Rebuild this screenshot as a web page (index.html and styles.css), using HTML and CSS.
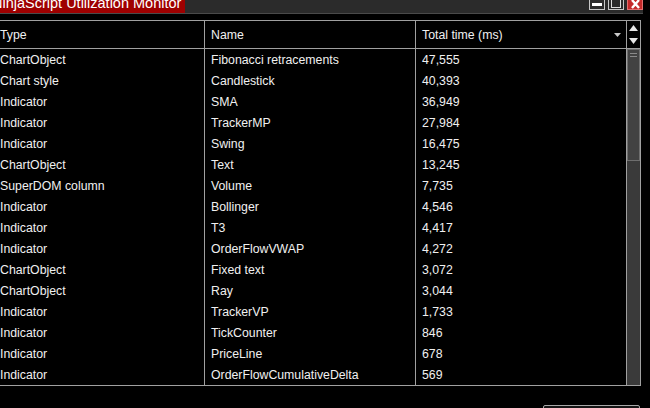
FILE: index.html
```html
<!DOCTYPE html>
<html lang="en">
<head>
  <meta charset="UTF-8" />
  <title>NinjaScript Utilization Monitor</title>
  <link rel="stylesheet" href="styles.css">
</head>
<body>
  <div class="janela">
    <div class="barra-titulo">
      <div class="aba-titulo"><span>NinjaScript Utilization Monitor</span></div>
      <div class="botoes-janela">
        <div class="btn-janela btn-min"><i></i></div>
        <div class="btn-janela btn-max"><i></i></div>
        <div class="btn-janela btn-fechar">
          <svg width="11" height="9" viewBox="0 0 11 9"><path d="M2 0 L9 8 M9 0 L2 8" stroke="#fff" stroke-width="2.4"/></svg>
        </div>
      </div>
    </div>

    <div class="tabela">
      <div class="cabecalho">
        <div class="celula">Type</div>
        <div class="celula">Name</div>
        <div class="celula ordenada">Total time (ms)
          <svg class="seta-ordem" width="7" height="4" viewBox="0 0 7 4"><path d="M0 0 H7 L3.5 4 Z" fill="#c8c8c8"/></svg>
        </div>
        <div class="rolagem-topo">
          <svg width="9" height="6" viewBox="0 0 9 6"><path d="M0 6 H9 L4.5 0 Z" fill="#e6e6e6"/></svg>
          <svg width="9" height="6" viewBox="0 0 9 6"><path d="M0 0 H9 L4.5 6 Z" fill="#e6e6e6"/></svg>
        </div>
      </div>

      <div class="corpo">
        <div class="linhas">
          <div class="linha"><div class="celula">ChartObject</div><div class="celula">Fibonacci retracements</div><div class="celula">47,555</div></div>
          <div class="linha"><div class="celula">Chart style</div><div class="celula">Candlestick</div><div class="celula">40,393</div></div>
          <div class="linha"><div class="celula">Indicator</div><div class="celula">SMA</div><div class="celula">36,949</div></div>
          <div class="linha"><div class="celula">Indicator</div><div class="celula">TrackerMP</div><div class="celula">27,984</div></div>
          <div class="linha"><div class="celula">Indicator</div><div class="celula">Swing</div><div class="celula">16,475</div></div>
          <div class="linha"><div class="celula">ChartObject</div><div class="celula">Text</div><div class="celula">13,245</div></div>
          <div class="linha"><div class="celula">SuperDOM column</div><div class="celula">Volume</div><div class="celula">7,735</div></div>
          <div class="linha"><div class="celula">Indicator</div><div class="celula">Bollinger</div><div class="celula">4,546</div></div>
          <div class="linha"><div class="celula">Indicator</div><div class="celula">T3</div><div class="celula">4,417</div></div>
          <div class="linha"><div class="celula">Indicator</div><div class="celula">OrderFlowVWAP</div><div class="celula">4,272</div></div>
          <div class="linha"><div class="celula">ChartObject</div><div class="celula">Fixed text</div><div class="celula">3,072</div></div>
          <div class="linha"><div class="celula">ChartObject</div><div class="celula">Ray</div><div class="celula">3,044</div></div>
          <div class="linha"><div class="celula">Indicator</div><div class="celula">TrackerVP</div><div class="celula">1,733</div></div>
          <div class="linha"><div class="celula">Indicator</div><div class="celula">TickCounter</div><div class="celula">846</div></div>
          <div class="linha"><div class="celula">Indicator</div><div class="celula">PriceLine</div><div class="celula">678</div></div>
          <div class="linha"><div class="celula">Indicator</div><div class="celula">OrderFlowCumulativeDelta</div><div class="celula">569</div></div>
        </div>
        <div class="rolagem">
          <div class="polegar"><i></i><i></i></div>
        </div>
      </div>
    </div>

    <div class="rodape">
      <button class="btn-rodape"></button>
    </div>
  </div>
</body>
</html>
```

FILE: styles.css
```css
* {
  box-sizing: border-box;
}

body {
  margin: 0;
  width: 650px;
  height: 408px;
  overflow: hidden;
  background-color: #000;
  color: #f0f0f0;
  font-family: "Liberation Sans", Arial, sans-serif;
  font-size: 12.3px;
}

.janela {
  width: 643px;
  height: 408px;
  overflow: hidden;
}

.barra-titulo {
  display: flex;
  height: 14px;
  background-color: #2b2b2b;
  border-bottom: 1px solid #4a4a4a;
  overflow: hidden;
}

.aba-titulo {
  width: 185px;
  height: 13px;
  background-color: #9e0000;
  overflow: hidden;
}

.aba-titulo span {
  display: block;
  margin-top: -3px;
  margin-left: -8px;
  font-size: 14.5px;
  line-height: 13px;
  color: #fff;
  white-space: nowrap;
}

.botoes-janela {
  margin-left: auto;
  display: flex;
  gap: 3px;
}

.btn-janela {
  width: 16px;
  height: 10px;
  border: 1px solid #c8c8c8;
  border-top: none;
  display: flex;
  align-items: center;
  justify-content: center;
}

.btn-min i {
  display: block;
  width: 10px;
  height: 3px;
  background-color: #fff;
}

.btn-max i {
  display: block;
  width: 10px;
  height: 9px;
  margin-top: -2px;
  border: 1px solid #ddd;
}

.btn-fechar {
  background-color: #c42a2a;
  border-color: #e07070;
}

.tabela {
  margin-top: 6px;
  margin-left: -7px;
  width: 648px;
  border: 1px solid #a0a0a0;
}

.cabecalho {
  display: flex;
  height: 28px;
  border-bottom: 1px solid #a0a0a0;
}

.cabecalho .celula {
  line-height: 27px;
  padding-top: 1px;
}

.celula {
  width: 211px;
  padding-left: 6px;
  border-right: 1px solid #a0a0a0;
  white-space: nowrap;
  overflow: hidden;
}

.ordenada {
  display: flex;
  align-items: center;
}

.seta-ordem {
  margin-left: auto;
  margin-right: 5px;
}

.rolagem-topo {
  width: 13px;
  display: flex;
  flex-direction: column;
  align-items: center;
  justify-content: center;
  gap: 7px;
}

.corpo {
  display: flex;
}

.linhas {
  width: 633px;
}

.linha {
  display: flex;
  height: 21px;
  line-height: 21px;
}

.linha .celula {
  padding-top: 1px;
}

.rolagem {
  width: 13px;
  background-color: #3a3a3a;
}

.polegar {
  height: 112px;
  background-color: #424242;
  border: 1px solid #6e6e6e;
  padding-top: 3px;
  display: flex;
  flex-direction: column;
  align-items: center;
  gap: 2px;
}

.polegar i {
  display: block;
  width: 7px;
  height: 1px;
  background-color: #8a8a8a;
}

.rodape {
  display: flex;
  justify-content: flex-end;
  padding-top: 19px;
  padding-right: 3px;
}

.btn-rodape {
  width: 97px;
  height: 24px;
  background-color: #151515;
  border: 1px solid #a8a8a8;
  border-radius: 2px;
}
```
